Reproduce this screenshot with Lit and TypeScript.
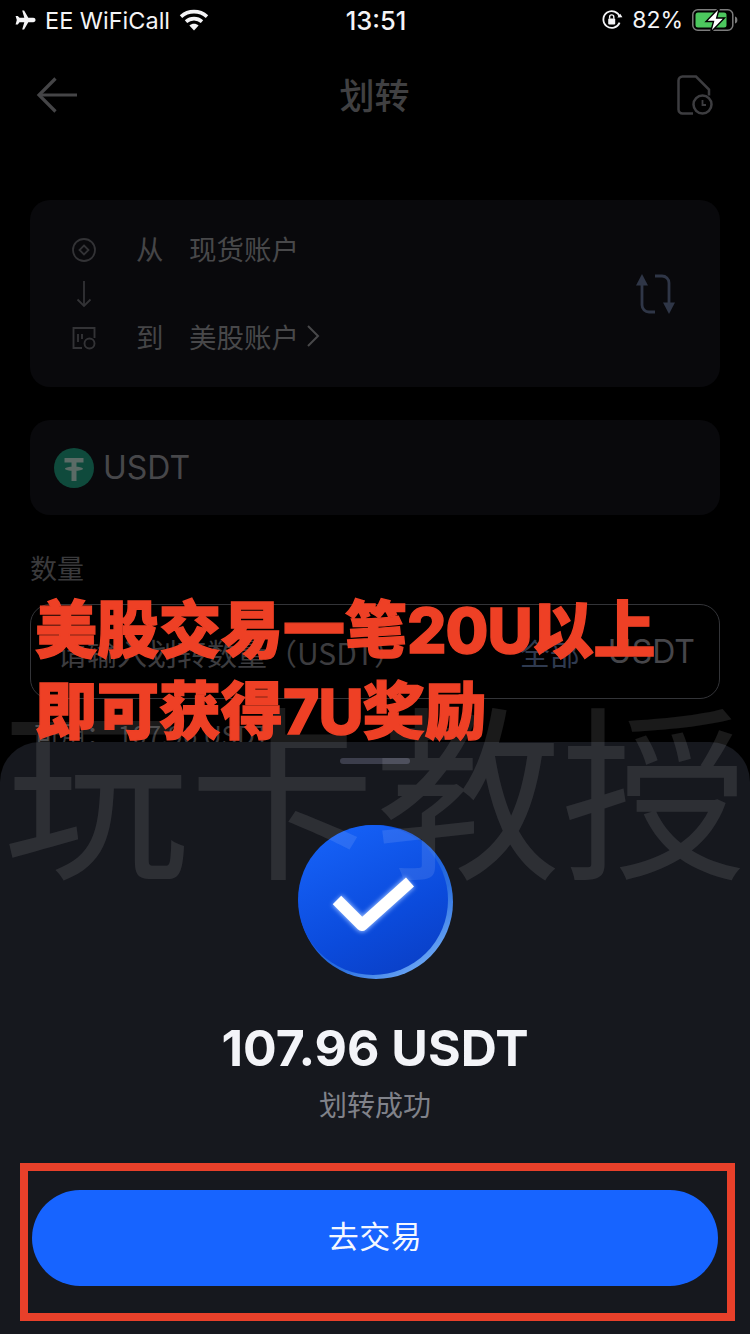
import { LitElement, html, css } from "lit";
import { customElement } from "lit/decorators.js";

@customElement("app-root")
export class AppRoot extends LitElement {
  static styles = css`
    :host {
      display: block;
      position: relative;
      width: 750px;
      height: 1334px;
      overflow: hidden;
      background: #000;
      font-family: "Noto Sans CJK SC", "Noto Sans", sans-serif;
      color: #454547;
    }
    svg { display: block; flex: none; }
    .status {
      height: 40px;
      display: grid;
      grid-template-columns: 1fr auto 1fr;
      align-items: center;
      color: #f4f4f6;
      font-family: "Inter", "Noto Sans", sans-serif;
      font-size: 23.5px;
      padding: 0 12px 0 14px;
    }
    .st-left { display: flex; align-items: center; gap: 9px; }
    .time { font-size: 25.5px; font-weight: 500; }
    .st-right { display: flex; align-items: center; justify-content: flex-end; gap: 9px; font-size: 23px; }
    .nav {
      height: 110px;
      padding: 0 37px 0 36px;
      display: grid;
      grid-template-columns: 1fr auto 1fr;
      align-items: center;
    }
    .nav .hist { justify-self: end; }
    .nav .title { font-size: 35px; font-weight: 500; color: #404042; line-height: 1; padding-bottom: 4px; }
    .body { padding: 50px 30px 0; }
    .card { background: #09090c; border-radius: 20px; }
    .transfer {
      height: 187px;
      display: flex;
      align-items: center;
      justify-content: space-between;
      padding: 0 45px 0 42px;
      box-sizing: border-box;
    }
    .rows { display: grid; grid-template-columns: 24px auto auto; grid-auto-rows: 44px; align-items: center; font-size: 27.5px; }
    .rows .dir { margin-left: 40px; width: 53px; padding-bottom: 4px; }
    .acct { display: flex; align-items: center; gap: 7px; color: #48484a; padding-bottom: 4px; }
    .coin-card {
      margin-top: 33px;
      height: 95px;
      display: flex;
      align-items: center;
      gap: 9px;
      padding-left: 24px;
      font-family: "Inter", "Noto Sans", sans-serif;
      font-size: 32px;
      color: #47474a;
    }
    .label { margin-top: 35px; font-size: 27px; line-height: 36px; color: #3a3a3c; }
    .input {
      margin-top: 18px;
      height: 95px;
      box-sizing: border-box;
      border: 1.5px solid #333438;
      border-radius: 20px;
      display: flex;
      align-items: center;
      padding: 0 24px 0 26px;
      font-size: 30px;
      color: #3c3c3f;
    }
    .input .ph { flex: 1; white-space: nowrap; }
    .input .all { color: #2f3a4f; margin-right: 28px; }
    .input .unit { font-family: "Inter", "Noto Sans", sans-serif; font-size: 32px; color: #46464a; }
    .avail { margin-top: 18px; padding-left: 4px; font-size: 26px; line-height: 34px; color: #3a3a3c; }
    .sheet {
      position: absolute;
      left: 0;
      right: 0;
      top: 742px;
      bottom: 0;
      background: #16181e;
      border-radius: 40px 40px 0 0;
      display: flex;
      flex-direction: column;
      align-items: center;
    }
    .handle { margin-top: 16px; width: 70px; height: 6px; border-radius: 3px; background: #3c3e4c; }
    .coin { margin: 60px 0 0 2px; }
    .amount {
      margin-top: 38px;
      font-family: "Inter", "Noto Sans", sans-serif;
      font-size: 50px;
      font-weight: 700;
      line-height: 60px;
      color: #f3f4f8;
    }
    .ok { margin-top: 6px; font-size: 28px; line-height: 40px; color: #80828a; }
    .btn {
      margin-top: 66px;
      width: 686px;
      height: 96px;
      box-sizing: border-box;
      padding-bottom: 7px;
      border-radius: 48px;
      background: #1764ff;
      color: #f5f8ff;
      font-size: 31px;
      display: flex;
      align-items: center;
      justify-content: center;
      letter-spacing: 0.5px;
    }
    .watermark {
      position: absolute;
      left: 0;
      top: 679px;
      width: 750px;
      display: flex;
      justify-content: center;
      font-size: 186px;
      line-height: 210px;
      white-space: nowrap;
      color: rgba(255, 255, 255, 0.1);
      pointer-events: none;
    }
    .caption {
      position: absolute;
      left: 35px;
      top: 588px;
      color: #ee4025;
      font-size: 62px;
      line-height: 77px;
      font-weight: 900;
      -webkit-text-stroke: 1.4px #ee4025;
      white-space: nowrap;
    }
    .caption b { font-family: "Inter", "Noto Sans", sans-serif; font-weight: 800; letter-spacing: -1px; }
    .frame {
      position: absolute;
      left: 20px;
      top: 1163px;
      width: 715px;
      height: 158px;
      box-sizing: border-box;
      border: 8px solid #e8402a;
    }
  `;

  render() {
    return html`
      <div class="status">
        <div class="st-left">
          <svg width="22" height="20" viewBox="0 0 22 20" fill="#f4f4f6"><path d="M8.2 0.5h1.9l4.2 7.3h4.900c1.400 0 2.300.9 2.300 2.200s-.9 2.200-2.300 2.200h-4.900l-4.200 7.300H8.200l2.100-7.300H5.500l-1.700 2.200H1.600L2.800 10 1.600 6h2.200l1.700 1.800h4.800z"/></svg>
          <span>EE WiFiCall</span>
          <svg width="30" height="22" viewBox="0 0 30 22" fill="none" stroke="#f4f4f6" stroke-width="3.6"><path d="M2 7.600c7.400-6.600 18.600-6.600 26 0"/><path d="M7 12.600c4.600-4 11.400-4 16 0"/><path d="M15 21.500l-4.600-5c2.600-2.200 6.600-2.200 9.200 0z" fill="#f4f4f6" stroke="none"/></svg>
        </div>
        <div class="time">13:51</div>
        <div class="st-right">
          <svg width="22" height="22" viewBox="0 0 22 22" fill="none" stroke="#f4f4f6" stroke-width="1.800"><path d="M18.600 13.600A8.400 8.400 0 1 1 18.800 8"/><path d="M21.400 8.200l-5 .2 2.800-3.600z" fill="#f4f4f6" stroke="none"/><rect x="7.200" y="9.600" width="7" height="6" rx="1" fill="#f4f4f6" stroke="none"/><path d="M8.600 9.800V8a2.100 2.100 0 0 1 4.200 0v1.800" stroke-width="1.400"/></svg>
          <span>82%</span>
          <svg width="46" height="26" viewBox="0 0 46 26"><rect x="0.800" y="2.800" width="40" height="20.400" rx="5" fill="none" stroke="#7c7c7c" stroke-width="1.500"/><rect x="3.500" y="5.500" width="31" height="15" rx="2.500" fill="#4cc85e"/><path d="M43 9.500c1.600.5 2.400 1.800 2.400 3.500s-.8 3-2.400 3.500z" fill="#7c7c7c"/><path d="M27.500 0.500L14 14.500h7.500L18.500 25.500 32.500 11h-7.800z" fill="#fff" stroke="#000" stroke-width="1.400"/></svg>
        </div>
      </div>
      <div class="nav">
        <svg width="41" height="36" viewBox="0 0 41 36" fill="none" stroke="#454547" stroke-width="3.200"><path d="M41 18H3"/><path d="M19.500 1.500L3 18l16.500 16.500"/></svg>
        <div class="title">划转</div>
        <svg class="hist" width="36" height="40" viewBox="0 0 36 40" fill="none" stroke="#3d3d40" stroke-width="2.500"><path d="M16 38.500H5.500a4 4 0 0 1-4-4V5.500a4 4 0 0 1 4-4H19l13 13v6"/><circle cx="25.500" cy="29.500" r="9"/><path d="M25.500 25v5h3.500" stroke-width="1.800"/></svg>
      </div>
      <div class="body">
        <div class="card transfer">
          <div class="rows">
            <svg width="24" height="24" viewBox="0 0 24 24" fill="none" stroke="#333336" stroke-width="1.800"><circle cx="12" cy="12" r="11"/><path d="M12 7.500l4.500 4.500-4.500 4.500L7.500 12z"/></svg>
            <span class="dir">从</span>
            <span class="acct">现货账户</span>
            <svg width="24" height="30" viewBox="0 0 24 30" fill="none" stroke="#333336" stroke-width="1.800"><path d="M12 2v25"/><path d="M5.500 20.500L12 27l6.500-6.500"/></svg>
            <span></span><span></span>
            <svg width="24" height="24" viewBox="0 0 24 24" fill="none" stroke="#333336" stroke-width="1.900"><path d="M10 22H1.500V2h21v10"/><circle cx="17.500" cy="17.500" r="5"/><path d="M6 8v8M10 8v5"/></svg>
            <span class="dir">到</span>
            <span class="acct">美股账户
              <svg width="14" height="24" viewBox="0 0 14 24" fill="none" stroke="#48484a" stroke-width="2"><path d="M2 2l10 10L2 22"/></svg>
            </span>
          </div>
          <svg width="39" height="40" viewBox="0 0 39 40" fill="none" stroke="#2f3647" stroke-width="2.800"><path d="M6 10v21a7 7 0 0 0 7 7h6"/><path d="M19 2h7a7 7 0 0 1 7 7v21"/><path d="M6 0l6 11.500H0z" fill="#2f3647" stroke="none"/><path d="M33 40l-6-11.500h12z" fill="#2f3647" stroke="none"/></svg>
        </div>
        <div class="card coin-card">
          <svg width="40" height="40" viewBox="0 0 40 40"><circle cx="20" cy="20" r="20" fill="#0f4a3c"/><path d="M10.500 10h19v4.600h-7v4.100c3.600.2 6.500 1 6.500 2s-2.900 1.800-6.500 2V33h-5V22.700c-3.600-.2-6.500-1-6.500-2s2.900-1.800 6.500-2v-4.100h-7z" fill="#5b6b66"/></svg>
          <span>USDT</span>
        </div>
        <div class="label">数量</div>
        <div class="input">
          <span class="ph">请输入划转数量（USDT）</span>
          <span class="all">全部</span>
          <span class="unit">USDT</span>
        </div>
        <div class="avail">可用： 107.96 USDT</div>
      </div>

      <div class="sheet">
        <div class="handle"></div>
        <svg class="coin" width="156" height="156" viewBox="0 0 156 156">
          <defs>
            <linearGradient id="face" x1="0.2" y1="0" x2="0.7" y2="1">
              <stop offset="0" stop-color="#1662f8"/><stop offset="0.65" stop-color="#0b4bdc"/><stop offset="1" stop-color="#0a40c8"/>
            </linearGradient>
            <linearGradient id="rim" x1="0.35" y1="0.3" x2="0.85" y2="0.95">
              <stop offset="0" stop-color="#0f4fd8"/><stop offset="0.55" stop-color="#2a6fe0"/><stop offset="1" stop-color="#74aef8"/>
            </linearGradient>
            <filter id="glow" x="-30%" y="-30%" width="160%" height="160%"><feGaussianBlur stdDeviation="2"/></filter>
          </defs>
          <circle cx="78" cy="78" r="77" fill="url(#rim)"/>
          <circle cx="75" cy="76" r="75" fill="url(#face)"/>
          <path d="M39 76L64 101l48-43" fill="none" stroke="#8fb6ff" stroke-width="14" stroke-linejoin="round" filter="url(#glow)"/>
          <path d="M39 76L64 101l48-43" fill="none" stroke="#fff" stroke-width="12" stroke-linejoin="round"/>
        </svg>
        <div class="amount">107.96 USDT</div>
        <div class="ok">划转成功</div>
        <div class="btn">去交易</div>
      </div>

      <div class="watermark">玩卡教授</div>
      <div class="caption">美股交易一笔<b>20U</b>以上<br />即可获得<b>7U</b>奖励</div>
      <div class="frame"></div>
    `;
  }
}
